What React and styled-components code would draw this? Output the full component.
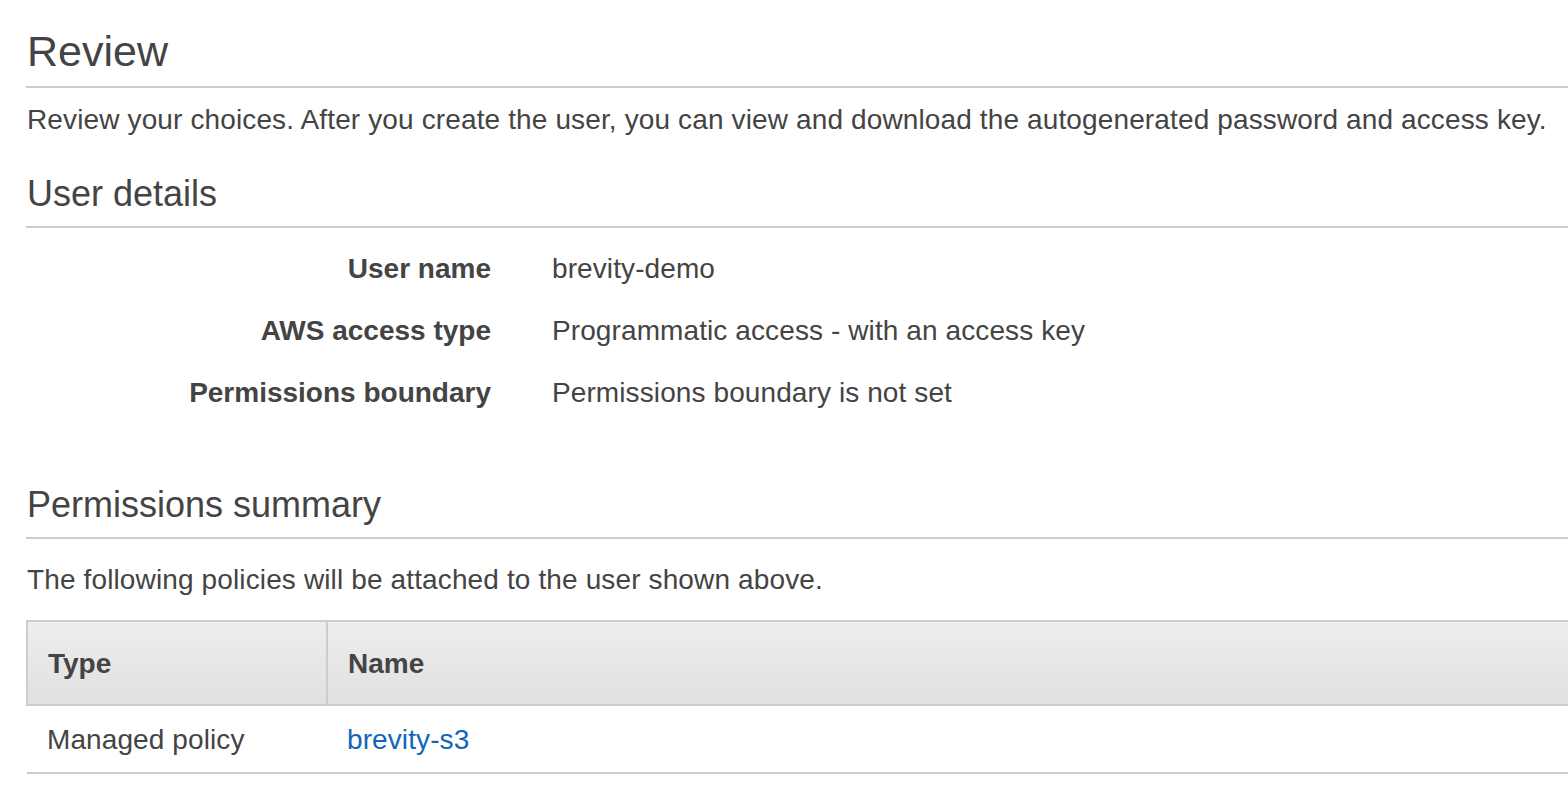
import React from "react";
import styled, { createGlobalStyle } from "styled-components";

const GlobalStyle = createGlobalStyle`
  html, body {
    margin: 0;
    padding: 0;
    background: #fff;
  }
  body {
    font-family: "Liberation Sans", Arial, sans-serif;
    color: #444;
    overflow: hidden;
  }
`;

const details = [
  { label: "User name", value: "brevity-demo" },
  { label: "AWS access type", value: "Programmatic access - with an access key" },
  { label: "Permissions boundary", value: "Permissions boundary is not set" },
];

const policies = [{ type: "Managed policy", name: "brevity-s3" }];

const App = () => {
  return (
    <>
      <GlobalStyle />
      <Page>
        <Title>Review</Title>
        <Intro>
          Review your choices. After you create the user, you can view and
          download the autogenerated password and access key.
        </Intro>

        <SectionTitle>User details</SectionTitle>
        <DetailList>
          {details.map((d) => (
            <React.Fragment key={d.label}>
              <DetailLabel>{d.label}</DetailLabel>
              <DetailValue>{d.value}</DetailValue>
            </React.Fragment>
          ))}
        </DetailList>

        <SectionTitle $spaced>Permissions summary</SectionTitle>
        <Intro $gap={25}>
          The following policies will be attached to the user shown above.
        </Intro>

        <Table>
          <thead>
            <tr>
              <HeadCell $first>Type</HeadCell>
              <HeadCell>Name</HeadCell>
            </tr>
          </thead>
          <tbody>
            {policies.map((p) => (
              <tr key={p.name}>
                <Cell>{p.type}</Cell>
                <Cell>
                  <PolicyLink href="#">{p.name}</PolicyLink>
                </Cell>
              </tr>
            ))}
          </tbody>
        </Table>
      </Page>
    </>
  );
};

const Page = styled.main`
  padding-left: 26px;
  min-height: 788px;
  box-sizing: border-box;
`;

const Title = styled.h2`
  margin: 0;
  padding: 27px 0 11px 1px;
  font-size: 43px;
  line-height: 48px;
  font-weight: 400;
  color: #444;
  border-bottom: 2px solid #cccccc;
`;

const Intro = styled.p`
  margin: ${({ $gap }) => ($gap ? `${$gap}px` : "16px")} 0 0;
  padding-left: 1px;
  font-size: 28px;
  line-height: 32px;
  letter-spacing: 0.13px;
  color: #444;
  white-space: nowrap;
`;

const SectionTitle = styled.h3`
  margin: ${({ $spaced }) => ($spaced ? "76px" : "38px")} 0 0;
  padding: 0 0 12px 1px;
  font-size: 36px;
  line-height: 40px;
  font-weight: 400;
  color: #444;
  border-bottom: 2px solid #cccccc;
`;

const DetailList = styled.dl`
  display: grid;
  grid-template-columns: 465px auto;
  column-gap: 61px;
  row-gap: 30px;
  margin: 25px 0 0;
  font-size: 28px;
  line-height: 32px;
`;

const DetailLabel = styled.dt`
  text-align: right;
  font-weight: 700;
  color: #444;
`;

const DetailValue = styled.dd`
  margin: 0;
  letter-spacing: 0.1px;
  color: #444;
`;

const Table = styled.table`
  margin-top: 24px;
  width: calc(100% + 40px);
  border-collapse: collapse;
  font-size: 28px;
  line-height: 32px;
`;

const HeadCell = styled.th`
  height: 80px;
  padding: 2px 20px 0;
  text-align: left;
  font-weight: 700;
  color: #444;
  background: linear-gradient(#eeeeee, #e0e0e0);
  border-top: 2px solid #cccccc;
  border-bottom: 2px solid #cccccc;
  border-left: 2px solid #cccccc;
  width: ${({ $first }) => ($first ? "258px" : "auto")};
  box-sizing: content-box;
`;

const Cell = styled.td`
  height: 64px;
  padding: 2px 20px 0;
  letter-spacing: 0.1px;
  color: #444;
  border-bottom: 2px solid #cccccc;
`;

const PolicyLink = styled.a`
  color: #1166bb;
  text-decoration: none;
`;

export default App;
